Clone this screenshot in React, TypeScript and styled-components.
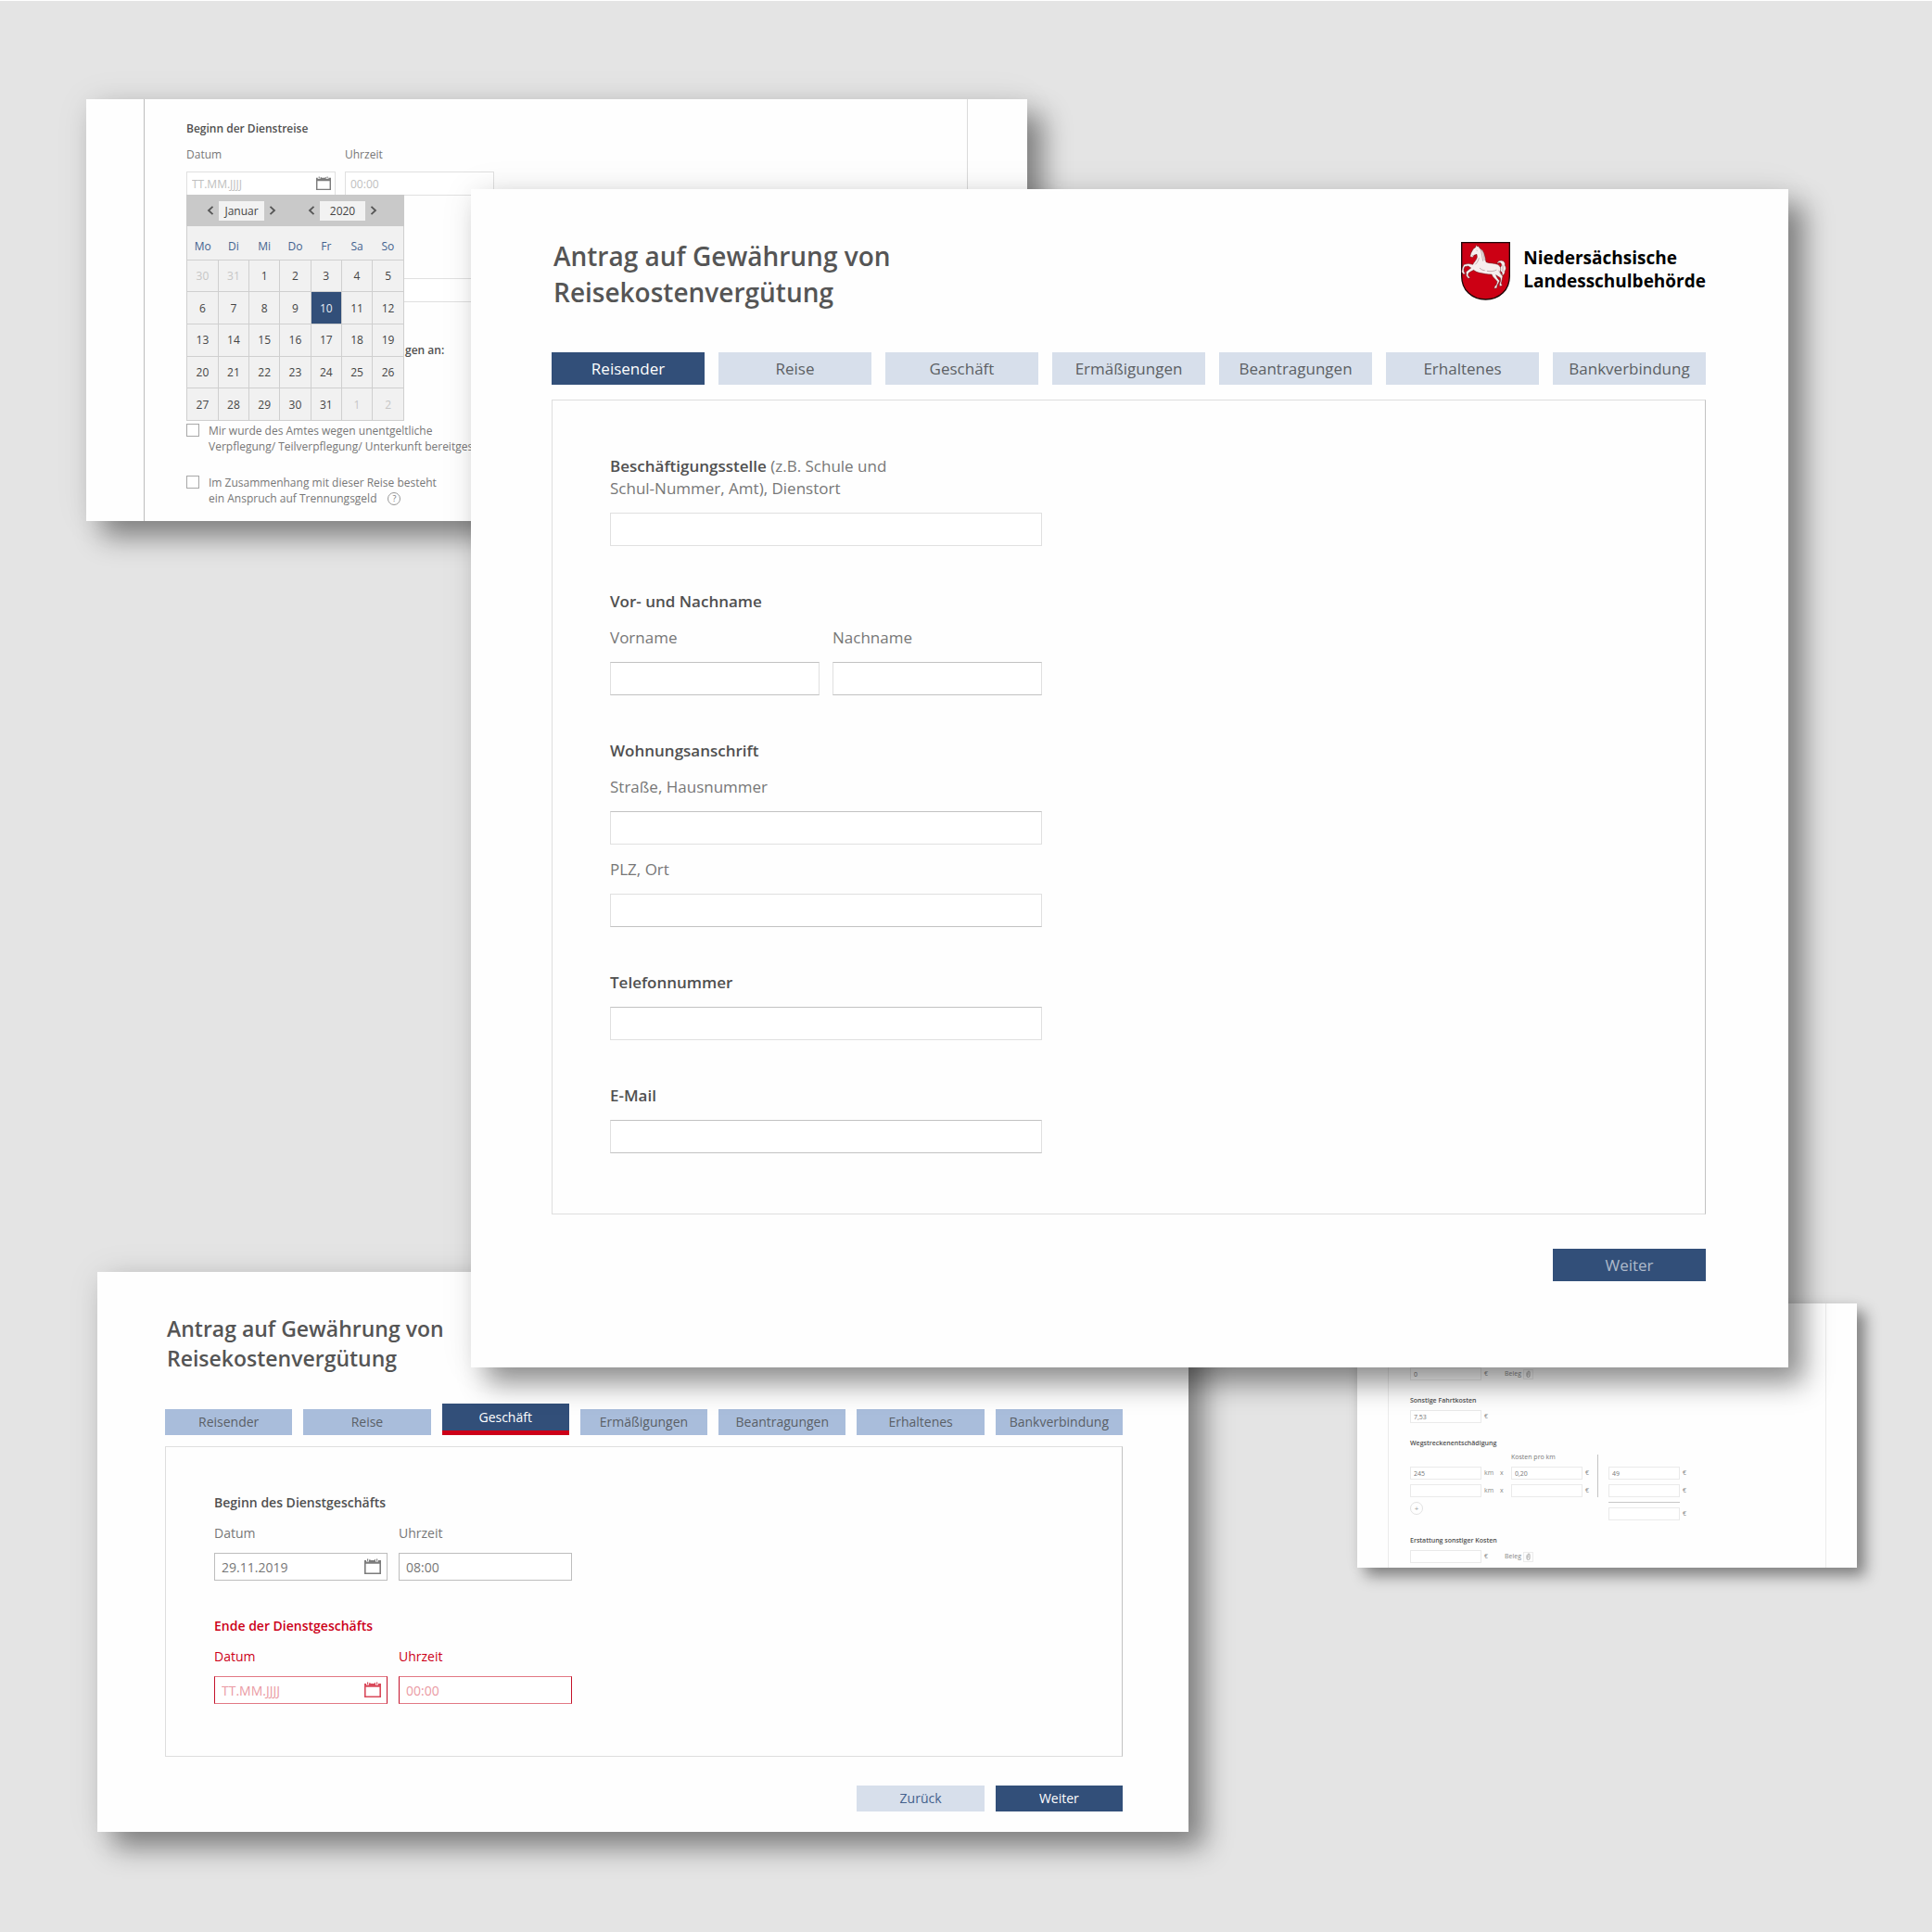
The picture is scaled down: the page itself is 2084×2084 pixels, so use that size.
import React from "react";
import styled, { createGlobalStyle, css } from "styled-components";

const GlobalStyle = createGlobalStyle`
  * { box-sizing: border-box; }
  body { margin: 0; background: #e4e4e4; }
  body, button, input { font-family: "Open Sans", "Noto Sans", sans-serif; }
  h1, h2, p { margin: 0; }
`;

const navy = "#324f79";
const red = "#cc0018";

type Size = "lg" | "md" | "sm" | "xs";

const sizes = {
  lg: { font: 17, line: 24, field: 36, gap: 15, group: 15, label: 14, pad: 10 },
  md: { font: 14, line: 20, field: 30, gap: 12, group: 13, label: 11, pad: 7 },
  sm: { font: 12, line: 18, field: 26, gap: 10, group: 10, label: 9, pad: 5 },
  xs: { font: 7, line: 10, field: 14, gap: 5, group: 5, label: 5, pad: 3 },
};

/* ---------- canvas and windows ---------- */

const Canvas = styled.main`
  position: relative;
  min-width: 1600px;
  min-height: max(100vh, 2060px);
  background: #e4e4e4;
  box-shadow: inset 0 1px #fff;
  overflow: hidden;
`;

const Window = styled.section<{ $small?: boolean }>`
  position: absolute;
  background: #fefefe;
  box-shadow: ${(p) =>
    p.$small
      ? "9px 9px 15px rgba(0, 0, 0, 0.42), 0 0 16px rgba(0, 0, 0, 0.05)"
      : "17px 17px 28px rgba(0, 0, 0, 0.42), 0 0 36px rgba(0, 0, 0, 0.07)"};
`;

const TripWindow = styled(Window)`
  top: 107px;
  left: 93px;
  right: 976px;
  padding: 0 64px 0 62px;
`;

const BusinessWindow = styled(Window)`
  top: 1372px;
  left: 105px;
  right: 802px;
  padding: 45px 71px 22px 73px;
`;

const CostWindow = styled(Window)`
  top: 1406px;
  right: 81px;
  width: 539px;
  padding: 0 33px;
`;

const TravellerWindow = styled(Window)`
  top: 204px;
  left: 508px;
  right: 155px;
  padding: 53px 89px 93px 87px;
`;

/* ---------- header ---------- */

const Header = styled.header`
  display: flex;
  justify-content: space-between;
  align-items: flex-start;
`;

const Title = styled.h1<{ $size: Size }>`
  padding-left: 2px;
  color: #555;
  font-weight: 600;
  font-size: ${(p) => (p.$size === "lg" ? 28 : 23)}px;
  line-height: ${(p) => (p.$size === "lg" ? 39 : 32)}px;
`;

const Brand = styled.div`
  display: flex;
  align-items: center;
  gap: 14px;
  padding-top: 4px;
`;

const BrandName = styled.p`
  color: #000;
  font-weight: 700;
  font-size: 19px;
  line-height: 25px;
  padding-bottom: 4px;
`;

/* ---------- tabs ---------- */

const Tabs = styled.nav<{ $size: Size }>`
  display: grid;
  grid-template-columns: repeat(7, 1fr);
  align-items: end;
  gap: ${(p) => sizes[p.$size].gap}px;
  margin-top: ${(p) => (p.$size === "lg" ? 45 : 33)}px;
  margin-bottom: ${(p) => (p.$size === "lg" ? 16 : 12)}px;
`;

const Action = styled.button<{ $size: Size; $bg: string; $fg: string }>`
  height: ${(p) => (p.$size === "lg" ? 35 : 28)}px;
  padding: 0;
  border: 0;
  background: ${(p) => p.$bg};
  color: ${(p) => p.$fg};
  font-size: ${(p) => sizes[p.$size].font}px;
  line-height: ${(p) => sizes[p.$size].line}px;
`;

const MarkedTab = styled(Action)`
  height: 34px;
  border-bottom: 5px solid ${red};
`;

/* ---------- forms ---------- */

const Panel = styled.form<{ $size: Size }>`
  display: flex;
  flex-direction: column;
  border: 1px solid #dedede;
  border-right-color: #c2c2c2;
  gap: ${(p) => (p.$size === "lg" ? 48 : 39)}px;
  padding: ${(p) => (p.$size === "lg" ? "59px 62px 65px" : "50px 52px 56px")};
`;

const SidePanel = styled.form<{ $left: string; $right: string }>`
  border-left: 1px solid ${(p) => p.$left};
  border-right: 1px solid ${(p) => p.$right};
`;

const Group = styled.div<{ $size: Size }>`
  display: flex;
  flex-direction: column;
  align-items: flex-start;
  gap: ${(p) => sizes[p.$size].group}px;
`;

const headingText = css`
  color: #505050;
  font-weight: 600;
`;

const Heading = styled.h2<{ $size: Size; $error?: boolean }>`
  ${headingText}
  ${(p) => p.$error && `color: ${red};`}
  font-size: ${(p) => sizes[p.$size].font}px;
  line-height: ${(p) => sizes[p.$size].line}px;
  white-space: nowrap;
`;

const Label = styled.label<{ $size: Size; $error?: boolean }>`
  color: ${(p) => (p.$error ? red : "#777")};
  font-size: ${(p) => sizes[p.$size].font}px;
  line-height: ${(p) => sizes[p.$size].line}px;
  max-width: 340px;
`;

const Strong = styled.strong`
  ${headingText}
`;

const HeadingLabel = styled(Label)`
  ${headingText}
`;

const Field = styled.div<{ $size: Size }>`
  display: flex;
  flex-direction: column;
  gap: ${(p) => sizes[p.$size].label}px;
`;

const Pair = styled.div<{ $size: Size }>`
  display: flex;
  gap: ${(p) => (p.$size === "lg" ? 14 : sizes[p.$size].gap)}px;
`;

const borders = { light: "#e0e0e0", mid: "#c2c2c2", faint: "#eaeaea" };

const Input = styled.input<{
  $size: Size;
  $w: number;
  $top?: string;
  $bottom?: string;
  $side?: string;
  $error?: boolean;
}>`
  width: ${(p) => p.$w}px;
  height: ${(p) => sizes[p.$size].field}px;
  padding: 0 ${(p) => sizes[p.$size].pad}px;
  border: 1px solid ${(p) => p.$side ?? (p.$size === "xs" ? borders.faint : borders.light)};
  ${(p) => p.$top && `border-top-color: ${p.$top};`}
  ${(p) => p.$bottom && `border-bottom-color: ${p.$bottom};`}
  border-radius: 0;
  background: #fff;
  color: #777;
  font-size: ${(p) => sizes[p.$size].font}px;
  &::placeholder {
    color: ${(p) => (p.$error ? "#ea9aa3" : "#c0c0c0")};
    opacity: 1;
  }
`;

const DateBox = styled.div`
  position: relative;
  display: flex;
`;

const DateButton = styled.button<{ $size: Size; $error?: boolean }>`
  position: absolute;
  top: 0;
  bottom: 0;
  right: ${(p) => (p.$size === "md" ? 7 : 5)}px;
  display: flex;
  align-items: center;
  padding: 0;
  border: 0;
  background: none;
  color: ${(p) => (p.$error ? "#d9495a" : "#7c7c7c")};
`;

const Footer = styled.footer<{ $size: Size }>`
  display: grid;
  grid-template-columns: repeat(7, 1fr);
  gap: ${(p) => sizes[p.$size].gap}px;
  margin-top: ${(p) => (p.$size === "lg" ? 37 : 31)}px;
  & > :first-child {
    grid-column-start: ${(p) => (p.$size === "lg" ? 7 : 6)};
  }
`;

/* ---------- date picker ---------- */

const Picker = styled.div`
  position: absolute;
  z-index: 1;
  top: 25px;
  left: 0;
  width: 235px;
  background: #f1f1f1;
  border: 1px solid #cfcfcf;
`;

const PickerBar = styled.div`
  display: flex;
  align-items: center;
  gap: 32px;
  height: 34px;
  margin: -1px -1px 0;
  padding-left: 21px;
  background: #c9c9c9;
`;

const Stepper = styled.div`
  display: flex;
  align-items: center;
  gap: 4px;
`;

const StepButton = styled.button`
  display: flex;
  padding: 0;
  border: 0;
  background: none;
  color: #555;
`;

const StepValue = styled.output`
  width: 49px;
  background: #f2f2f2;
  color: #444;
  font-size: 12px;
  line-height: 21px;
  text-align: center;
`;

const Month = styled.table`
  width: 233px;
  height: 209px;
  border-collapse: collapse;
  table-layout: fixed;
  font-size: 12px;
  th {
    height: 36px;
    padding: 8px 0 0;
    color: #44638f;
    font-weight: 400;
  }
  tr:last-child td { border-bottom: 0; }
`;

const DayCell = styled.td<{ $selected?: boolean }>`
  padding: 0;
  border: 1px solid #cfcfcf;
  background: ${(p) => (p.$selected ? navy : "transparent")};
  &:first-child { border-left: 0; }
  &:last-child { border-right: 0; }
`;

const Day = styled.button<{ $muted?: boolean; $selected?: boolean }>`
  display: block;
  width: 100%;
  height: 32px;
  padding: 0;
  border: 0;
  background: none;
  color: ${(p) => (p.$selected ? "#e8edf4" : p.$muted ? "#c6c6c6" : "#444")};
  font-size: 12px;
`;

/* ---------- trip window ---------- */

const TripBody = styled.div`
  display: flex;
  flex-direction: column;
  padding: 23px 45px 16px;
`;

const Covered = styled.div`
  display: flex;
  flex-direction: column;
  padding-top: 89px;
`;

const TrailHeading = styled.div`
  padding: 43px 0 0 236px;
`;

const Checks = styled.div`
  display: flex;
  flex-direction: column;
  gap: 22px;
  padding-top: 69px;
`;

const CheckRow = styled.div`
  display: flex;
  align-items: flex-start;
  gap: 10px;
`;

const Checkbox = styled.input`
  appearance: none;
  flex: none;
  width: 14px;
  height: 14px;
  margin: 1px 0 0;
  border: 1px solid #a8a8a8;
  background: #fff;
`;

const CheckLabel = styled.label`
  color: #777;
  font-size: 12px;
  line-height: 17px;
  white-space: nowrap;
`;

const LastLine = styled.span`
  display: flex;
  align-items: center;
  gap: 12px;
`;

const Help = styled.span`
  width: 14px;
  height: 14px;
  border: 1px solid #999;
  border-radius: 50%;
  font-size: 9px;
  line-height: 12px;
  text-align: center;
`;

/* ---------- cost window ---------- */

const CostBody = styled.div`
  display: flex;
  flex-direction: column;
  gap: 17px;
  padding: 69px 23px 5px;
`;

const CostRow = styled.div`
  display: flex;
  align-items: center;
`;

const Unit = styled.span<{ $w: number }>`
  width: ${(p) => p.$w}px;
  padding-left: 3px;
  color: #888;
  font-size: 7px;
  line-height: 10px;
`;

const Attach = styled.button`
  display: flex;
  align-items: center;
  justify-content: center;
  width: 11px;
  height: 11px;
  padding: 0;
  border: 1px solid #ececec;
  background: #fcfcfc;
  color: #aaa;
`;

const Mileage = styled.div`
  display: flex;
  align-items: flex-start;
`;

const MileageColumn = styled.div<{ $top: number }>`
  display: flex;
  flex-direction: column;
  gap: 5px;
  padding-top: ${(p) => p.$top}px;
`;

const Divider = styled.div`
  width: 1px;
  height: 46px;
  margin: 7px 11px 0 0;
  background: #c4c4c4;
`;

const SumLine = styled.div`
  width: 77px;
  height: 1px;
  background: #c8c8c8;
`;

const AddButton = styled.button`
  width: 14px;
  height: 14px;
  padding: 0;
  border: 1px solid #e2e2e2;
  border-radius: 50%;
  background: none;
  color: #999;
  font-size: 8px;
  line-height: 10px;
`;

/* ---------- drawings ---------- */

const CalendarIcon = ({ size }: { size: number }) => (
  <svg width={size} height={size} viewBox="0 0 18 18" aria-hidden="true">
    <path
      fill="currentColor"
      fillRule="evenodd"
      d="M0 2h2v1.500h3V2h7v1.500h3V2h3v15H0zM1.600 5.800v9.600h14.800V5.800z"
    />
    <path fill="currentColor" d="M3 .6h1.200v2.200H3zM13 .6h1.200v2.200H13zM5.400 1h1v1.200h-1zM11 1h1v1.200h-1z" />
  </svg>
);

const Chevron = ({ left }: { left?: boolean }) => (
  <svg width="10" height="10" viewBox="0 0 10 10" aria-hidden="true">
    <path
      d={left ? "M7.500 .8L3 5l4.500 4.200" : "M2.500 .8L7 5l-4.500 4.200"}
      fill="none"
      stroke="currentColor"
      strokeWidth="1.800"
    />
  </svg>
);

const ClipIcon = () => (
  <svg width="5" height="8" viewBox="0 0 5 8" aria-hidden="true">
    <path d="M1 2.500v3.500a1.500 1.500 0 0 0 3 0v-4a1 1 0 0 0-2 0v3.500" fill="none" stroke="currentColor" />
  </svg>
);

const Crest = () => (
  <svg width="53" height="63" viewBox="0 0 159 189" role="img" aria-label="Niedersachsenross">
    <path
      d="M2 2h155v108c0 46-33 76-77.500 76S2 156 2 110z"
      fill="#cc0014"
      stroke="#1c0608"
      strokeWidth="4"
    />
    <g fill="#f6eeee" stroke="#5a1218" strokeWidth="1.500" strokeLinejoin="round">
      <path d="M124 84c6-3 9-10 5-15-4-4-10-1-12 3-1-8 6-13 14-12 9 1 13 8 11 16 5 6 4 14 0 18 1 7-3 13-10 16 2-6 1-10-1-13-5-3-9-7-7-13z" />
      <path d="M57 14l4 7c8 4 13 12 15 21 3 9 3 15 5 23 12 5 27 3 38 8 8 4 11 13 8 21-1 7 3 10 8 17l-3 14-2 10 4 5-9 4-1-7 4-12-1-9-14-9c3 9 8 14 12 19l-8 15-1 8-9 2 2-8 5-4 3-11c-6-8-15-13-18-23-13 1-27-3-39-5-8-2-15-5-19-9l-10 5-7 5-1 8 7 7-7 2-6-8-1-13 16-13-9-6-11 2-3 8 1 9 4 6-6 2-6-8 2-13 5-11 15-3 14 3c4-8 12-14 14-24l-1-9-9 3-5 7-8-3 3-11 8-14 7-5 1-7 4 4z" />
    </g>
    <path
      d="M63 24c5 11 5 24 8 38M68 26c6 11 6 22 8 34M50 27l3 1M36 43l4 2M58 52c-2 9-6 15-12 21M84 94c12 2 24 1 31-4M60 84c5 5 10 8 17 8M122 92c3 6 6 12 10 17M134 74c3 8 0 14 1 22"
      fill="none"
      stroke="#a08084"
      strokeWidth="1.800"
    />
  </svg>
);

/* ---------- data ---------- */

const steps = [
  "Reisender",
  "Reise",
  "Geschäft",
  "Ermäßigungen",
  "Beantragungen",
  "Erhaltenes",
  "Bankverbindung",
];

const weekdays = ["Mo", "Di", "Mi", "Do", "Fr", "Sa", "So"];

const weeks = [
  [30, 31, 1, 2, 3, 4, 5],
  [6, 7, 8, 9, 10, 11, 12],
  [13, 14, 15, 16, 17, 18, 19],
  [20, 21, 22, 23, 24, 25, 26],
  [27, 28, 29, 30, 31, 1, 2],
];

/* ---------- composed parts ---------- */

const TitleText = ({ size }: { size: Size }) => (
  <Title $size={size}>
    Antrag auf Gewährung von
    <br />
    Reisekostenvergütung
  </Title>
);

function DateTime(props: {
  id: string;
  size: Size;
  width: number;
  title: string;
  date?: string;
  time?: string;
  error?: boolean;
  children?: React.ReactNode;
}) {
  const { id, size, width, title, date, time, error, children } = props;
  const edge = error
    ? { $side: "#c4122a", $top: "#e27884", $bottom: "#e27884" }
    : size === "md"
      ? { $side: "#bdbdbd" }
      : {};
  return (
    <Group $size={size}>
      <Heading $size={size} $error={error}>{title}</Heading>
      <Pair $size={size}>
        <Field $size={size}>
          <Label $size={size} $error={error} htmlFor={id + "-date"}>Datum</Label>
          <DateBox>
            <Input id={id + "-date"} $size={size} $w={width} $error={error} {...edge} defaultValue={date} placeholder="TT.MM.JJJJ" />
            <DateButton type="button" aria-label="Kalender öffnen" $size={size} $error={error}>
              <CalendarIcon size={size === "md" ? 18 : 16} />
            </DateButton>
            {children}
          </DateBox>
        </Field>
        <Field $size={size}>
          <Label $size={size} $error={error} htmlFor={id + "-time"}>Uhrzeit</Label>
          <Input id={id + "-time"} $size={size} $w={width} $error={error} {...edge} defaultValue={time} placeholder="00:00" />
        </Field>
      </Pair>
    </Group>
  );
}

const DatePicker = () => (
  <Picker>
    <PickerBar>
      {["Januar", "2020"].map((value) => (
        <Stepper key={value}>
          <StepButton type="button" aria-label="Zurück"><Chevron left /></StepButton>
          <StepValue>{value}</StepValue>
          <StepButton type="button" aria-label="Vor"><Chevron /></StepButton>
        </Stepper>
      ))}
    </PickerBar>
    <Month>
      <thead>
        <tr>{weekdays.map((d) => <th key={d} scope="col">{d}</th>)}</tr>
      </thead>
      <tbody>
        {weeks.map((week, w) => (
          <tr key={w}>
            {week.map((day) => (
              <DayCell key={day} $selected={day === 10}>
                <Day
                  type="button"
                  $muted={(w === 0 && day > 20) || (w === 4 && day < 20)}
                  $selected={day === 10}
                >
                  {day}
                </Day>
              </DayCell>
            ))}
          </tr>
        ))}
      </tbody>
    </Month>
  </Picker>
);

const Receipt = ({ id, label, value }: { id: string; label: string; value?: string }) => (
  <CostRow>
    <Input id={id} aria-label={label} $size="xs" $w={77} defaultValue={value} />
    <Unit $w={22}>€</Unit>
    <Unit $w={23}>Beleg</Unit>
    <Attach type="button" aria-label="Beleg anhängen"><ClipIcon /></Attach>
  </CostRow>
);

export default function App() {
  return (
    <>
      <GlobalStyle />
      <Canvas>
        <TripWindow>
          <SidePanel $left="#bdbdbd" $right="#dadada">
            <TripBody>
              <DateTime id="trip" size="sm" width={161} title="Beginn der Dienstreise">
                <DatePicker />
              </DateTime>
              <Covered>
                <Input aria-label="Reiseziel" $size="sm" $w={332} />
              </Covered>
              <TrailHeading>
                <Heading $size="sm">gen an:</Heading>
              </TrailHeading>
              <Checks>
                <CheckRow>
                  <Checkbox type="checkbox" id="meals" />
                  <CheckLabel htmlFor="meals">
                    Mir wurde des Amtes wegen unentgeltliche
                    <br />
                    Verpflegung/ Teilverpflegung/ Unterkunft bereitgestellt
                  </CheckLabel>
                </CheckRow>
                <CheckRow>
                  <Checkbox type="checkbox" id="separation" />
                  <CheckLabel htmlFor="separation">
                    Im Zusammenhang mit dieser Reise besteht
                    <LastLine>
                      ein Anspruch auf Trennungsgeld
                      <Help>?</Help>
                    </LastLine>
                  </CheckLabel>
                </CheckRow>
              </Checks>
            </TripBody>
          </SidePanel>
        </TripWindow>

        <BusinessWindow>
          <TitleText size="md" />
          <Tabs $size="md">
            {steps.map((s, i) =>
              i === 2 ? (
                <MarkedTab key={s} $size="md" $bg={navy} $fg="#fff">{s}</MarkedTab>
              ) : (
                <Action key={s} $size="md" $bg="#a9bddb" $fg="#5a5f66">{s}</Action>
              ),
            )}
          </Tabs>
          <Panel $size="md">
            <DateTime id="start" size="md" width={187} title="Beginn des Dienstgeschäfts" date="29.11.2019" time="08:00" />
            <DateTime id="end" size="md" width={187} title="Ende der Dienstgeschäfts" error />
          </Panel>
          <Footer $size="md">
            <Action $size="md" $bg="#d7dfeb" $fg="#44618c">Zurück</Action>
            <Action $size="md" $bg={navy} $fg="#fff">Weiter</Action>
          </Footer>
        </BusinessWindow>

        <CostWindow $small>
          <SidePanel $left="#ebebeb" $right="#ebebeb">
            <CostBody>
              <Receipt id="fare" label="Fahrtkosten" value="0" />
              <Group $size="xs">
                <Heading $size="xs">Sonstige Fahrtkosten</Heading>
                <CostRow>
                  <Input aria-label="Sonstige Fahrtkosten" $size="xs" $w={77} defaultValue="7,53" />
                  <Unit $w={22}>€</Unit>
                </CostRow>
              </Group>
              <div>
                <Heading $size="xs">Wegstreckenentschädigung</Heading>
                <Mileage>
                  <MileageColumn $top={20}>
                    {["245", ""].map((v, i) => (
                      <CostRow key={i}>
                        <Input aria-label="Kilometer" $size="xs" $w={77} defaultValue={v} />
                        <Unit $w={17}>km</Unit>
                        <Unit $w={15}>x</Unit>
                      </CostRow>
                    ))}
                    <AddButton type="button" aria-label="Zeile hinzufügen">+</AddButton>
                  </MileageColumn>
                  <MileageColumn $top={5}>
                    <Label $size="xs" htmlFor="rate-0">Kosten pro km</Label>
                    {["0,20", ""].map((v, i) => (
                      <CostRow key={i}>
                        <Input id={"rate-" + i} aria-label="Kosten pro km" $size="xs" $w={77} defaultValue={v} />
                        <Unit $w={16}>€</Unit>
                      </CostRow>
                    ))}
                  </MileageColumn>
                  <Divider />
                  <MileageColumn $top={20}>
                    {["49", ""].map((v, i) => (
                      <CostRow key={i}>
                        <Input aria-label="Betrag" $size="xs" $w={77} defaultValue={v} />
                        <Unit $w={16}>€</Unit>
                      </CostRow>
                    ))}
                    <SumLine />
                    <CostRow>
                      <Input aria-label="Summe" $size="xs" $w={77} />
                      <Unit $w={16}>€</Unit>
                    </CostRow>
                  </MileageColumn>
                </Mileage>
              </div>
              <Group $size="xs">
                <Heading $size="xs">Erstattung sonstiger Kosten</Heading>
                <Receipt id="other" label="Sonstige Kosten" />
              </Group>
            </CostBody>
          </SidePanel>
        </CostWindow>

        <TravellerWindow>
          <Header>
            <TitleText size="lg" />
            <Brand>
              <Crest />
              <BrandName>
                Niedersächsische
                <br />
                Landesschulbehörde
              </BrandName>
            </Brand>
          </Header>
          <Tabs $size="lg">
            {steps.map((s, i) => (
              <Action key={s} $size="lg" $bg={i ? "#d7dfeb" : navy} $fg={i ? "#5c5f64" : "#fff"}>
                {s}
              </Action>
            ))}
          </Tabs>
          <Panel $size="lg">
            <Field $size="lg">
              <Label $size="lg" htmlFor="office">
                <Strong>Beschäftigungsstelle</Strong> (z.B. Schule und
                <br />
                Schul-Nummer, Amt), Dienstort
              </Label>
              <Input id="office" $size="lg" $w={466} />
            </Field>
            <Group $size="lg">
              <Heading $size="lg">Vor- und Nachname</Heading>
              <Pair $size="lg">
                <Field $size="lg">
                  <Label $size="lg" htmlFor="first">Vorname</Label>
                  <Input id="first" $size="lg" $w={226} $top={borders.mid} $bottom={borders.mid} />
                </Field>
                <Field $size="lg">
                  <Label $size="lg" htmlFor="last">Nachname</Label>
                  <Input id="last" $size="lg" $w={226} $top={borders.mid} $bottom={borders.mid} />
                </Field>
              </Pair>
            </Group>
            <Group $size="lg">
              <Heading $size="lg">Wohnungsanschrift</Heading>
              <Field $size="lg">
                <Label $size="lg" htmlFor="street">Straße, Hausnummer</Label>
                <Input id="street" $size="lg" $w={466} $top={borders.mid} />
              </Field>
              <Field $size="lg">
                <Label $size="lg" htmlFor="city">PLZ, Ort</Label>
                <Input id="city" $size="lg" $w={466} $bottom={borders.mid} />
              </Field>
            </Group>
            <Field $size="lg">
              <HeadingLabel $size="lg" htmlFor="phone">Telefonnummer</HeadingLabel>
              <Input id="phone" $size="lg" $w={466} $top={borders.mid} />
            </Field>
            <Field $size="lg">
              <HeadingLabel $size="lg" htmlFor="mail">E-Mail</HeadingLabel>
              <Input id="mail" $size="lg" $w={466} $top={borders.mid} $bottom={borders.mid} />
            </Field>
          </Panel>
          <Footer $size="lg">
            <Action $size="lg" $bg={navy} $fg="#aebacb">Weiter</Action>
          </Footer>
        </TravellerWindow>
      </Canvas>
    </>
  );
}
